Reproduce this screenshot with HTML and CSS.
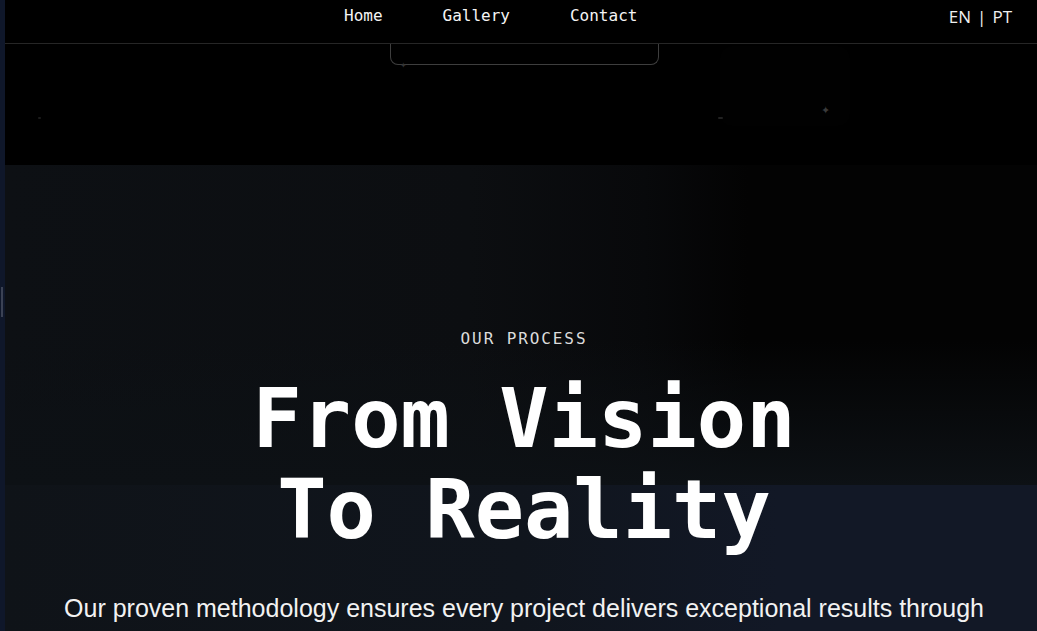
FILE: index.html
```html
<!DOCTYPE html>
<html lang="en">
<head>
<meta charset="utf-8">
<title>From Vision To Reality</title>
<link rel="stylesheet" href="styles.css">
</head>
<body>
<div class="rail"><span class="thumb"></span></div>
<div class="page">
  <header class="nav">
    <nav class="links">
      <a href="#">Home</a>
      <a href="#">Gallery</a>
      <a href="#">Contact</a>
    </nav>
    <div class="lang"><span>EN</span><span class="sep">|</span><span>PT</span></div>
  </header>
  <section class="hero">
    <div class="tab"></div>
    <span class="star s1"></span>
    <span class="star s2"></span>
    <span class="spark s3">✦</span>
    <span class="spark s4">✦</span>
    <div class="glow"></div>
  </section>
  <section class="process">
    <p class="eyebrow">OUR PROCESS</p>
    <h1 class="title">From Vision<br>To Reality</h1>
    <p class="lead">Our proven methodology ensures every project delivers exceptional results through</p>
  </section>
</div>
</body>
</html>
```

FILE: styles.css
```css
* { box-sizing: border-box; }
html, body { margin: 0; padding: 0; height: 100%; }
body {
  background: #0f172a;
  display: flex;
  overflow: hidden;
}
.rail {
  width: 5px;
  flex: none;
  position: relative;
  background: #0f172a;
}
.thumb {
  position: absolute;
  left: 1px;
  top: 287px;
  width: 2px;
  height: 30px;
  background: #3b4254;
}
.page {
  flex: 1;
  min-width: 0;
  display: flex;
  flex-direction: column;
}
.nav {
  height: 44px;
  background: #000;
  border-bottom: 1px solid #262626;
  display: flex;
  align-items: flex-start;
  padding: 5px 25px 0 339px;
  position: relative;
  z-index: 2;
}
.links {
  display: flex;
  gap: 60px;
}
.links a {
  color: #f5f5f5;
  text-decoration: none;
  font-family: "DejaVu Sans Mono", monospace;
  font-size: 16px;
  line-height: 22px;
}
.lang {
  margin-left: auto;
  color: #f0f0f0;
  font-family: "Open Sans", "Noto Sans", sans-serif;
  font-size: 17px;
  line-height: 24px;
  display: flex;
  gap: 6px;
}
.hero {
  height: 121px;
  background: #000;
  position: relative;
}
.tab {
  width: 269px;
  height: 21px;
  margin-left: 385px;
  border: 1px solid #3e3e3e;
  border-top: none;
  border-radius: 0 0 8px 8px;
}
.glow {
  position: absolute;
  left: 715px;
  top: 2px;
  width: 130px;
  height: 80px;
  border-radius: 12px;
  background: rgba(255,255,255,0.005);
}
.star {
  position: absolute;
  width: 3px;
  height: 2px;
  border-radius: 1px;
  background: #1c1c1c;
}
.s1 { left: 33px; top: 73px; }
.s2 { left: 713px; top: 73px; width: 5px; background: #222; }
.spark {
  position: absolute;
  color: #444;
  font-family: "DejaVu Sans", sans-serif;
  font-size: 9px;
  line-height: 9px;
}
.s3 { left: 816px; top: 62px; color: #3a3a3a; font-size: 11px; }
.s4 { left: 395px; top: 17px; color: #333; font-size: 8px; }
.process {
  flex: 1;
  text-align: center;
  padding: 164px 0 0 6px;
  background-color: #111827;
  background-image:
    linear-gradient(to bottom, rgba(13,17,21,0) 55%, rgba(13,17,21,1) 100%),
    linear-gradient(to right, #0d1014 0%, #0c0e11 45%, #08090b 62%, #030303 72%, #030303 100%),
    linear-gradient(to right, #0f1318 0%, #10151d 50%, #121826 75%, #121826 100%);
  background-size: 100% 320px, 100% 320px, 100% 100%;
  background-position: 0 0, 0 0, 0 0;
  background-repeat: no-repeat;
}
.eyebrow {
  margin: 0;
  color: #dcdcdc;
  font-family: "DejaVu Sans Mono", monospace;
  font-size: 16px;
  line-height: 20px;
  letter-spacing: 1.9px;
}
.title {
  margin: 24px 0 0;
  color: #ffffff;
  font-family: "DejaVu Sans Mono", monospace;
  font-weight: bold;
  font-size: 82px;
  line-height: 91px;
  letter-spacing: 0;
}
.lead {
  margin: 35px 0 0;
  color: #f2f2f2;
  font-family: "Liberation Sans", Arial, sans-serif;
  font-size: 25px;
  line-height: 36px;
}
```
